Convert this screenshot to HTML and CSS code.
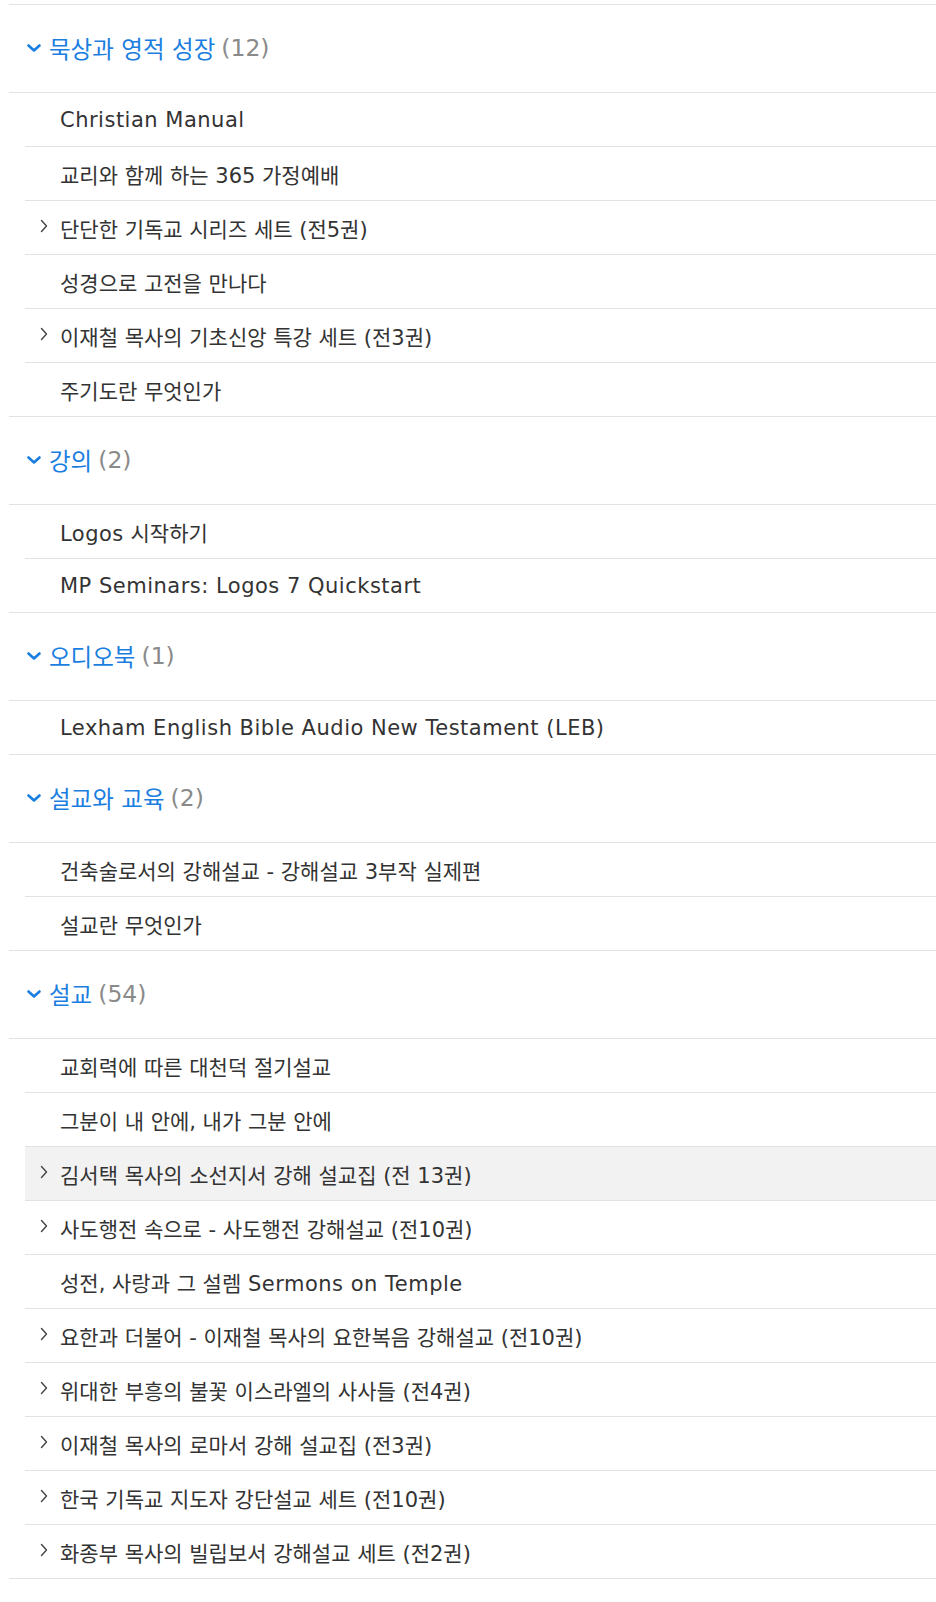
FILE: index.html
```html
<!DOCTYPE html>
<html lang="ko">
<head>
<meta charset="utf-8">
<title>Collections</title>
<link rel="stylesheet" href="styles.css">
</head>
<body>
<div class="list">
  <section class="section">
    <div class="head"><svg class="down" viewBox="0 0 14 8"><path d="M1.5 1.5 L7 6.5 L12.5 1.5"/></svg><span class="title">묵상과 영적 성장</span><span class="count">(12)</span></div>
    <ul class="items">
      <li class="item"><span class="label en">Christian Manual</span></li>
      <li class="item"><span class="label">교리와 함께 하는 365 가정예배</span></li>
      <li class="item"><svg class="right" viewBox="0 0 8 14"><path d="M1.5 1.5 L6.5 7 L1.5 12.5"/></svg><span class="label">단단한 기독교 시리즈 세트 (전5권)</span></li>
      <li class="item"><span class="label">성경으로 고전을 만나다</span></li>
      <li class="item"><svg class="right" viewBox="0 0 8 14"><path d="M1.5 1.5 L6.5 7 L1.5 12.5"/></svg><span class="label">이재철 목사의 기초신앙 특강 세트 (전3권)</span></li>
      <li class="item"><span class="label">주기도란 무엇인가</span></li>
    </ul>
  </section>
  <section class="section">
    <div class="head"><svg class="down" viewBox="0 0 14 8"><path d="M1.5 1.5 L7 6.5 L12.5 1.5"/></svg><span class="title">강의</span><span class="count">(2)</span></div>
    <ul class="items">
      <li class="item"><span class="label"><span class="en">Logos</span> 시작하기</span></li>
      <li class="item"><span class="label en">MP Seminars: Logos 7 Quickstart</span></li>
    </ul>
  </section>
  <section class="section">
    <div class="head"><svg class="down" viewBox="0 0 14 8"><path d="M1.5 1.5 L7 6.5 L12.5 1.5"/></svg><span class="title">오디오북</span><span class="count">(1)</span></div>
    <ul class="items">
      <li class="item"><span class="label en">Lexham English Bible Audio New Testament (LEB)</span></li>
    </ul>
  </section>
  <section class="section">
    <div class="head"><svg class="down" viewBox="0 0 14 8"><path d="M1.5 1.5 L7 6.5 L12.5 1.5"/></svg><span class="title">설교와 교육</span><span class="count">(2)</span></div>
    <ul class="items">
      <li class="item"><span class="label">건축술로서의 강해설교 - 강해설교 3부작 실제편</span></li>
      <li class="item"><span class="label">설교란 무엇인가</span></li>
    </ul>
  </section>
  <section class="section">
    <div class="head"><svg class="down" viewBox="0 0 14 8"><path d="M1.5 1.5 L7 6.5 L12.5 1.5"/></svg><span class="title">설교</span><span class="count">(54)</span></div>
    <ul class="items">
      <li class="item"><span class="label">교회력에 따른 대천덕 절기설교</span></li>
      <li class="item"><span class="label">그분이 내 안에, 내가 그분 안에</span></li>
      <li class="item hover"><svg class="right" viewBox="0 0 8 14"><path d="M1.5 1.5 L6.5 7 L1.5 12.5"/></svg><span class="label">김서택 목사의 소선지서 강해 설교집 (전 13권)</span></li>
      <li class="item"><svg class="right" viewBox="0 0 8 14"><path d="M1.5 1.5 L6.5 7 L1.5 12.5"/></svg><span class="label">사도행전 속으로 - 사도행전 강해설교 (전10권)</span></li>
      <li class="item"><span class="label">성전, 사랑과 그 설렘 <span class="en">Sermons on Temple</span></span></li>
      <li class="item"><svg class="right" viewBox="0 0 8 14"><path d="M1.5 1.5 L6.5 7 L1.5 12.5"/></svg><span class="label">요한과 더불어 - 이재철 목사의 요한복음 강해설교 (전10권)</span></li>
      <li class="item"><svg class="right" viewBox="0 0 8 14"><path d="M1.5 1.5 L6.5 7 L1.5 12.5"/></svg><span class="label">위대한 부흥의 불꽃 이스라엘의 사사들 (전4권)</span></li>
      <li class="item"><svg class="right" viewBox="0 0 8 14"><path d="M1.5 1.5 L6.5 7 L1.5 12.5"/></svg><span class="label">이재철 목사의 로마서 강해 설교집 (전3권)</span></li>
      <li class="item"><svg class="right" viewBox="0 0 8 14"><path d="M1.5 1.5 L6.5 7 L1.5 12.5"/></svg><span class="label">한국 기독교 지도자 강단설교 세트 (전10권)</span></li>
      <li class="item"><svg class="right" viewBox="0 0 8 14"><path d="M1.5 1.5 L6.5 7 L1.5 12.5"/></svg><span class="label">화종부 목사의 빌립보서 강해설교 세트 (전2권)</span></li>
    </ul>
  </section>
</div>
</body>
</html>
```

FILE: styles.css
```css
html, body {
  margin: 0;
  padding: 0;
  background: #ffffff;
}

body {
  font-family: "DejaVu Sans", "Noto Sans CJK KR", sans-serif;
  color: #333333;
}

.list {
  margin: 4px 0 0 9px;
  border-top: 1px solid #e2e2e2;
}

.section {
  border-bottom: 1px solid #e2e2e2;
}

.head {
  height: 88px;
  display: flex;
  align-items: center;
  padding-left: 18px;
  padding-bottom: 2px;
  box-sizing: border-box;
  border-bottom: 1px solid #e2e2e2;
  font-size: 23.5px;
}

.down {
  width: 14px;
  height: 8px;
  margin-right: 8px;
  fill: none;
  stroke: #1a7ee0;
  stroke-width: 2.6;
  stroke-linecap: round;
  stroke-linejoin: round;
}

.title {
  color: #1a7ee0;
}

.count {
  color: #8a8a8a;
  margin-left: 6px;
}

.items {
  list-style: none;
  margin: 0 0 0 16px;
  padding: 0;
}

.item {
  height: 53px;
  display: flex;
  align-items: center;
  position: relative;
  padding-left: 35px;
  font-size: 21px;
  color: #333333;
}

.item + .item {
  border-top: 1px solid #e2e2e2;
}

.item.hover {
  background: #f2f2f2;
}

.en {
  letter-spacing: 0.5px;
}

.right {
  position: absolute;
  left: 15px;
  top: 50%;
  width: 8px;
  height: 14px;
  margin-top: -9px;
  fill: none;
  stroke: #444444;
  stroke-width: 1.4;
  stroke-linecap: round;
  stroke-linejoin: round;
}
```
